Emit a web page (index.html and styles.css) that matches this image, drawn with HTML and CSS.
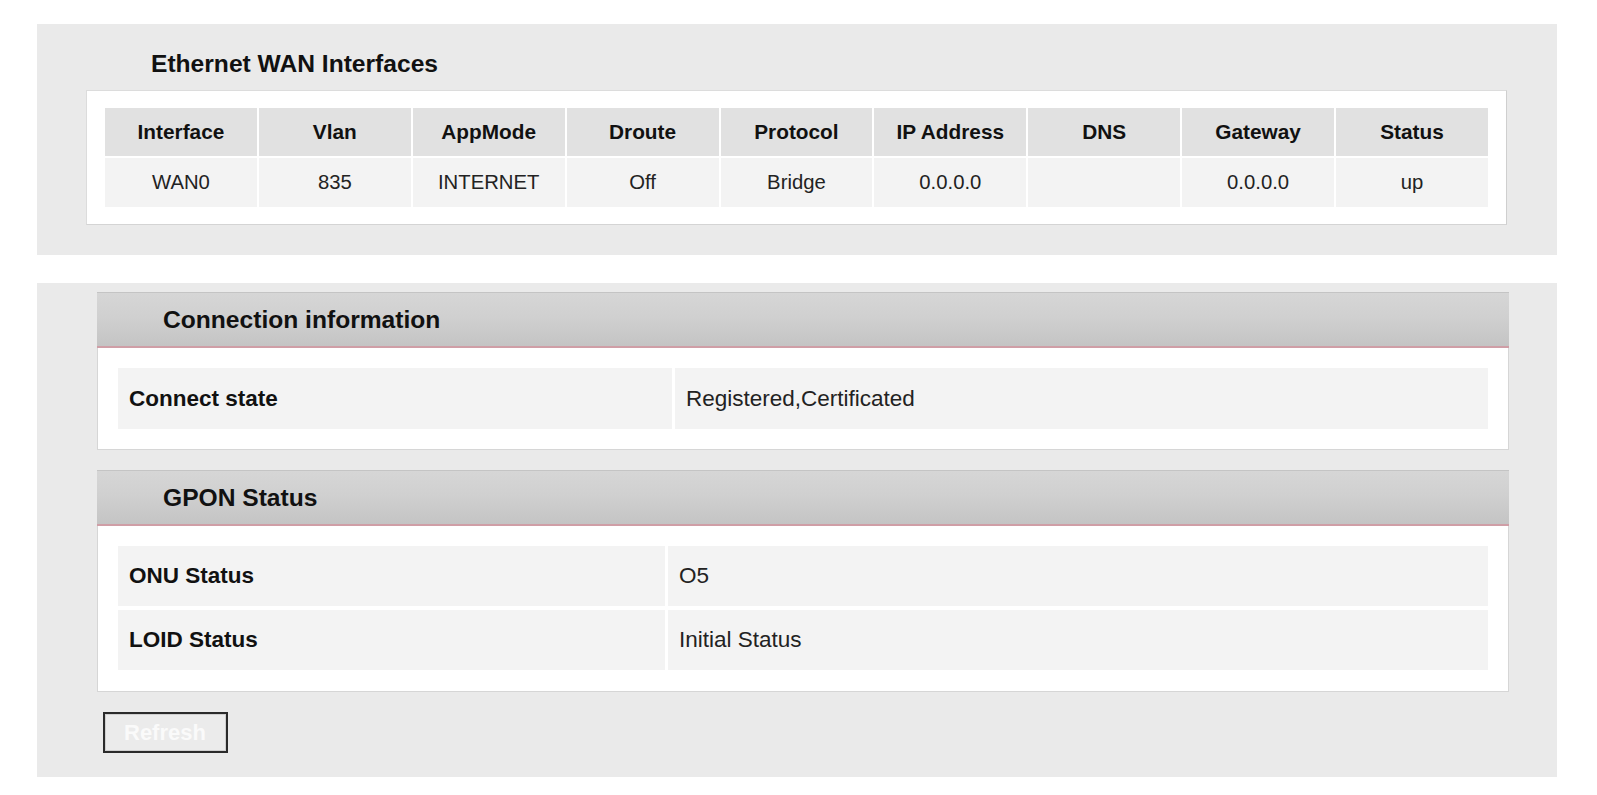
FILE: index.html
```html
<!DOCTYPE html>
<html lang="en">
<head>
    <meta charset="UTF-8">
    <title>Device Information</title>
    <link rel="stylesheet" href="styles.css">
</head>
<body>

<!-- WAN interfaces -->
<div class="panel wan-panel">
    <h2 class="wan-title">Ethernet WAN Interfaces</h2>
    <div class="wan-card">
        <table class="wan-table">
            <tr>
                <th>Interface</th>
                <th>Vlan</th>
                <th>AppMode</th>
                <th>Droute</th>
                <th>Protocol</th>
                <th>IP Address</th>
                <th>DNS</th>
                <th>Gateway</th>
                <th>Status</th>
            </tr>
            <tr>
                <td>WAN0</td>
                <td>835</td>
                <td>INTERNET</td>
                <td>Off</td>
                <td>Bridge</td>
                <td>0.0.0.0</td>
                <td></td>
                <td>0.0.0.0</td>
                <td>up</td>
            </tr>
        </table>
    </div>
</div>

<!-- PON info -->
<div class="panel info-panel">
    <div class="section">
        <div class="section-head">Connection information</div>
        <div class="section-body">
            <table class="info-table conn-table">
                <tr>
                    <td class="label">Connect state</td>
                    <td class="value">Registered,Certificated</td>
                </tr>
            </table>
        </div>
    </div>

    <div class="section">
        <div class="section-head">GPON Status</div>
        <div class="section-body">
            <table class="info-table gpon-table">
                <tr>
                    <td class="label">ONU Status</td>
                    <td class="value">O5</td>
                </tr>
                <tr>
                    <td class="label">LOID Status</td>
                    <td class="value">Initial Status</td>
                </tr>
            </table>
        </div>
    </div>

    <button class="refresh-btn" onclick="location.reload()">Refresh</button>
</div>

</body>
</html>
```

FILE: styles.css
```css
body {
    margin: 0;
    background-color: #ffffff;
    font-family: "Liberation Sans", Arial, sans-serif;
    color: #1a1a1a;
}

.panel {
    width: 1520px;
    margin-left: 37px;
    background-color: #eaeaea;
    box-sizing: border-box;
}

/* ---- WAN table ---- */

.wan-panel {
    margin-top: 24px;
    height: 231px;
    padding: 26px 50px 0 49px;
}

.wan-title {
    margin: 0 0 12px 65px;
    font-size: 24.6px;
    line-height: 28px;
    font-weight: bold;
    color: #111;
}

.wan-card {
    background-color: #fff;
    border: 1px solid #dcdcdc;
    border-right-color: #cfcfcf;
    border-bottom-color: #d4d4d4;
    padding: 15px 16px 15px 16px;
}

.wan-table {
    width: 100%;
    table-layout: fixed;
    border-collapse: separate;
    border-spacing: 2px;
}

.wan-table th,
.wan-table td {
    padding: 0;
    text-align: center;
}

.wan-table th {
    height: 48px;
    background-color: #e1e1e1;
    font-size: 20.8px;
    font-weight: bold;
    color: #111;
}

.wan-table td {
    height: 49px;
    background-color: #f3f3f3;
    font-size: 20.3px;
    color: #222;
}

/* ---- Info sections ---- */

.info-panel {
    margin-top: 28px;
    height: 494px;
    padding: 9px 48px 0 60px;
}

.section {
    margin-bottom: 20px;
}

.section-head {
    height: 53px;
    display: flex;
    align-items: center;
    padding-left: 66px;
    border-top: 1px solid #c4c4c4;
    border-bottom: 2px solid #cf9ea6;
    background: linear-gradient(to bottom, #d6d6d6 0%, #d0d0d0 45%, #c4c4c4 100%);
    font-size: 24.6px;
    font-weight: bold;
    color: #111;
}

.section-body {
    background-color: #fff;
    border: 1px solid #d6d6d6;
    border-top: none;
    padding: 17px 17px 17px 17px;
}

.info-table {
    width: 100%;
    border-collapse: separate;
    border-spacing: 3px;
}

.info-table td {
    background-color: #f3f3f3;
    font-size: 22.5px;
    padding: 0 0 0 11px;
}

.conn-table td {
    height: 61px;
}

.conn-table .label {
    width: 543px;
}

.gpon-table {
    border-spacing: 3px 4px;
    margin-top: -1px;
}

.gpon-table td {
    height: 60px;
}

.gpon-table .label {
    width: 536px;
}

.info-table .label {
    font-weight: bold;
    color: #111;
}

.info-table .value {
    color: #222;
}

.refresh-btn {
    margin: 0 0 0 6px;
    width: 125px;
    height: 41px;
    padding: 0 0 0 19px;
    text-align: left;
    background-color: #ebebeb;
    border: 2px solid #2a2a2a;
    box-shadow: inset 0 0 0 1px #cfcfcf;
    color: #fafafa;
    font-family: "Liberation Sans", Arial, sans-serif;
    font-size: 22px;
    font-weight: bold;
    cursor: pointer;
}
```
